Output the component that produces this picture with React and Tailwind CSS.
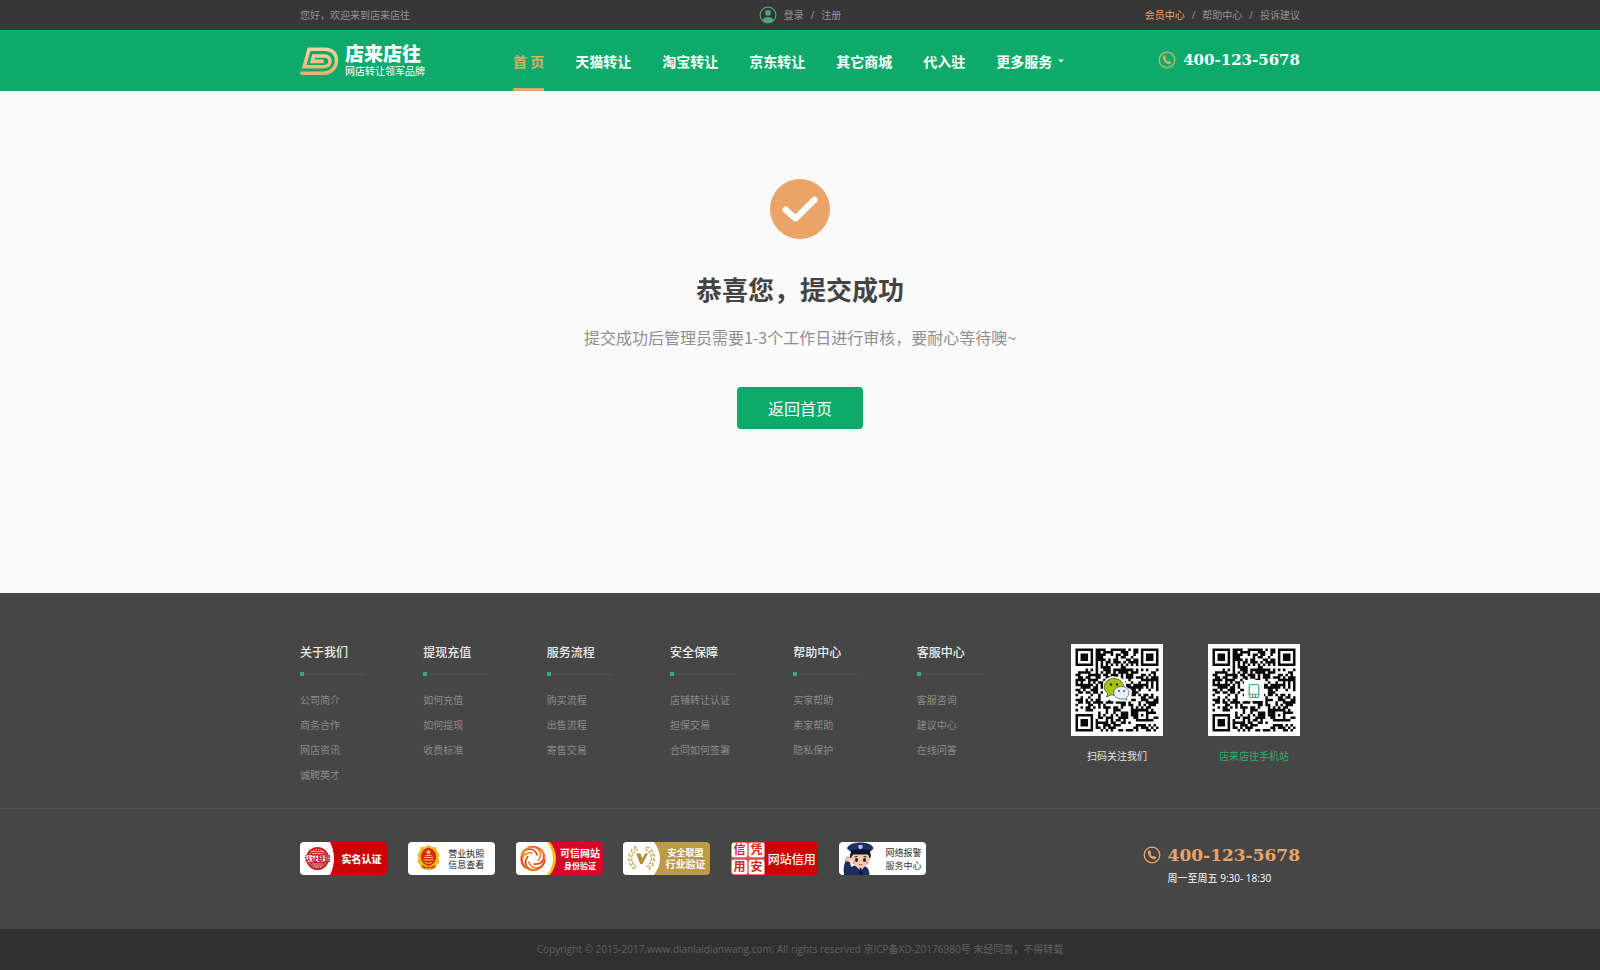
import React from "react";

const COLUMNS = [
  { title: "关于我们", links: ["公司简介", "商务合作", "网店资讯", "诚聘英才"] },
  { title: "提现充值", links: ["如何充值", "如何提现", "收费标准"] },
  { title: "服务流程", links: ["购买流程", "出售流程", "寄售交易"] },
  { title: "安全保障", links: ["店铺转让认证", "担保交易", "合同如何签署"] },
  { title: "帮助中心", links: ["买家帮助", "卖家帮助", "隐私保护"] },
  { title: "客服中心", links: ["客服咨询", "建议中心", "在线问答"] },
];

const NAV = ["天猫转让", "淘宝转让", "京东转让", "其它商城", "代入驻"];

function Logo() {
  return (
    <svg viewBox="0 0 39 30" className="h-[30px] w-[39px]" fill="none" aria-hidden="true">
      <defs>
        <linearGradient id="logoFill" x1="0" y1="0" x2="0" y2="1">
          <stop offset="0" stopColor="#efd3a0" />
          <stop offset="1" stopColor="#f0b070" />
        </linearGradient>
      </defs>
      <path
        d="M0.4 27.2H23C31 27.2 36.4 22 36.4 14.6C36.4 7.6 32 3.2 25.6 3.2H9L4.2 20.8H23.4C27.6 20.8 30 18.4 30 15.2C30 12 27.8 10 24.2 10H13.6L12.2 15.4H23.6"
        stroke="url(#logoFill)"
        strokeWidth="3.6"
      />
    </svg>
  );
}

function UserIcon() {
  return (
    <svg viewBox="0 0 18 18" className="h-[18px] w-[18px]" fill="none" aria-hidden="true">
      <circle cx="9" cy="9" r="7.9" stroke="#4aa876" strokeWidth="1.2" />
      <circle cx="9" cy="6.8" r="2.9" fill="#4aa876" />
      <path d="M3.6 14.4C4.2 11.6 6.4 10.9 9 10.9s4.8.7 5.4 3.5C13 16 11.2 16.8 9 16.8S5 16 3.6 14.4Z" fill="#4aa876" />
    </svg>
  );
}

function PhoneIcon({ color }) {
  return (
    <svg viewBox="0 0 18 18" className="h-[18px] w-[18px]" fill="none" aria-hidden="true">
      <circle cx="9" cy="9" r="7.8" stroke={color} strokeWidth="1.3" />
      <path
        d="M5.6 4.8L6.9 4.3L8.2 6.7L7.3 7.7C7.7 8.9 8.7 10 10 10.6L11.1 9.9L13.3 11.3L12.6 12.7C11.8 13.5 10.4 13.3 9.3 12.8C7.2 11.8 5.7 10.1 5.1 8C4.8 6.8 4.9 5.6 5.6 4.8Z"
        fill={color}
      />
    </svg>
  );
}

const SIZE = 33;

function finderModule(x, y, ox, oy) {
  const dx = x - ox;
  const dy = y - oy;
  if (dx < -1 || dy < -1 || dx > 7 || dy > 7) return null;
  const ring = Math.max(Math.abs(dx - 3), Math.abs(dy - 3));
  return ring === 3 || ring <= 1;
}

function buildModules() {
  let seed = 20176980;
  let d = "";
  for (let y = 0; y < SIZE; y++) {
    for (let x = 0; x < SIZE; x++) {
      seed = (seed * 1103515245 + 12345) % 2147483648;
      let on = seed / 2147483648 < 0.52;
      if (x === 6) on = y % 2 === 0;
      if (y === 6) on = x % 2 === 0;
      const align = Math.max(Math.abs(x - 26), Math.abs(y - 26));
      if (align <= 2) on = align !== 1;
      for (const [ox, oy] of [[0, 0], [SIZE - 7, 0], [0, SIZE - 7]]) {
        const f = finderModule(x, y, ox, oy);
        if (f !== null) on = f;
      }
      if (on) d += `M${x} ${y}h1v1h-1z`;
    }
  }
  return d;
}

const MODULES = buildModules();

function QrCode({ label, children }) {
  return (
    <svg viewBox="0 0 92 92" className="h-[92px] w-[92px] bg-white" role="img" aria-label={label}>
      <path d={MODULES} fill="#0a0a0a" transform="translate(4.5 4.5) scale(2.515)" />
      {children}
    </svg>
  );
}

function WechatMark() {
  return (
    <g>
      <path d="M32 42C32 36 37 32 44 32.5c7 0 12 5 11 10l6 4-1 11-16 0-12-3Z" fill="#fff" />
      <path d="M43 34.5c-5.7 0-9.8 3.8-9.8 8.5 0 2.6 1.3 4.7 3.4 6.3L35.6 53l4.4-2.2c1 .3 2 .4 3 .4 5.5 0 9.8-3.6 9.8-8.2S48.5 34.5 43 34.5Z" fill="#a5c414" stroke="#49591a" strokeWidth=".8" />
      <path d="M50.5 42.5c-4.5 0-7.7 2.8-7.7 6.3s3.2 6.3 7.7 6.3c.9 0 1.7-.1 2.5-.3l3 1.5-.8-2.6c1.7-1.2 2.8-2.9 2.8-4.9 0-3.4-3.1-6.3-7.5-6.3Z" fill="#e8f0fa" stroke="#56606e" strokeWidth=".8" />
      <circle cx="40" cy="40.5" r="1.2" fill="#26300a" />
      <circle cx="46" cy="40.5" r="1.2" fill="#26300a" />
      <circle cx="48" cy="47" r=".9" fill="#333" />
      <circle cx="53" cy="47" r=".9" fill="#333" />
    </g>
  );
}

function MobileMark() {
  return (
    <g fill="none" stroke="#35b06c">
      <rect x="36" y="36" width="20" height="21" rx="2" fill="#fff" stroke="none" />
      <rect x="41.2" y="40.5" width="9.6" height="13" rx="1.5" strokeWidth="1.2" />
      <path d="M41.5 50.3h9M44.5 50.5v3M47.5 50.5v3" strokeWidth="1" />
    </g>
  );
}

function SealArt() {
  return (
    <svg viewBox="0 0 36 33" className="h-[33px] w-[36px] shrink-0" aria-hidden="true">
      <path d="M0 0H30Q38 16.5 30 33H0Z" fill="#fff" />
      <circle cx="17.5" cy="16.5" r="11.5" fill="#c4222a" />
      <circle cx="17.5" cy="16.5" r="9" fill="none" stroke="#fff" strokeWidth=".7" strokeDasharray="1.5 1" />
      <path d="M11 9.5h13M12 11.5h11M12 22h11M13.5 24h8" stroke="#fff" strokeWidth=".6" />
      <rect x="4" y="13" width="27" height="7" fill="#fff" />
      <text x="17.5" y="19" textAnchor="middle" fontSize="6.5" fontWeight="900" fill="#c4222a">认证联盟</text>
    </svg>
  );
}

function EmblemArt() {
  return (
    <svg viewBox="0 0 40 33" className="h-[33px] w-[40px] shrink-0" aria-hidden="true">
      <path d="M20.5 3L24 5.2l4-.2 1 4 2.500 3-1 4 1 4-3 3.500-1.500 3.500-3.500.5-3 1-3-1-3.500-.5-1.500-3.500-3-3.500 1-4-1-4 2.500-3 1-4 4 .2Z" fill="#f5b81c" />
      <path d="M20.5 5.5c5 1.500 8 5 7.500 10.500-.4 4-3.500 7-7.500 8-4-1-7.100-4-7.500-8-.5-5.500 2.500-9 7.500-10.500Z" fill="#dc2718" />
      <path d="M20.5 7.5l.8 1.7 1.9.2-1.4 1.3.4 1.8-1.7-.9-1.7.9.4-1.8-1.4-1.3 1.9-.2Z" fill="#f9d342" />
      <path d="M16 15.500h9M17.500 13.500h6M15.500 18h10M17 20.500c2 1 5 1 7 0" stroke="#f9d342" strokeWidth="1" fill="none" />
      <path d="M14 24l4 2M27 24l-4 2M18.500 25.500h4" stroke="#dc2718" strokeWidth="1.6" />
    </svg>
  );
}

function SwirlArt() {
  return (
    <svg viewBox="0 0 42 33" className="h-[33px] w-[42px] shrink-0" aria-hidden="true">
      <path d="M0 0H34Q46 16.5 34 33H0Z" fill="#f9c20a" />
      <path d="M0 0H31Q43 16.5 31 33H0Z" fill="#fff" />
      <g fill="none" strokeWidth="1.7" strokeLinecap="round">
        {[0, 60, 120, 180, 240, 300].map((a, i) => (
          <path
            key={a}
            d="M13 5.3C21 2.5 29 9 27.6 16.5C26.5 20.5 23 22.5 18 22"
            stroke={i % 2 ? "#f08a22" : "#e2451f"}
            transform={`rotate(${a} 17 16.5)`}
          />
        ))}
      </g>
    </svg>
  );
}

function LaurelArt() {
  const leaves = [-140, -118, -96, -74, -52, -30, 30, 52, 74, 96, 118, 140];
  return (
    <svg viewBox="0 0 41 33" className="h-[33px] w-[41px] shrink-0" aria-hidden="true">
      <path d="M0 0H31Q43 16.5 31 33H0Z" fill="#fff" />
      <g fill="#cfae5f">
        {leaves.map((a) => (
          <g key={a} transform={`rotate(${a} 18.5 16.5)`}>
            <ellipse cx="18.5" cy="3.8" rx=".9" ry="2.1" transform="rotate(60 18.5 3.8)" />
            <ellipse cx="18.5" cy="6.6" rx=".8" ry="1.8" transform="rotate(110 18.5 6.6)" />
          </g>
        ))}
      </g>
      <path d="M12.5 11.5h5l1.8 5.2 2.7-5.2h3L19.5 22h-2.4L13.8 13Z" fill="#b58c2d" />
    </svg>
  );
}

function StampArt() {
  const tiles = [
    ["信", 0, 0],
    ["凭", 17, 0],
    ["用", 0, 17],
    ["安", 17, 17],
  ];
  return (
    <svg viewBox="0 0 34 33" className="h-[33px] w-[34px] shrink-0" aria-hidden="true">
      <rect width="34" height="33" fill="#d9564a" />
      {tiles.map(([ch, x, y]) => (
        <g key={ch}>
          <rect x={x + 0.7} y={y + 0.7} width="15.6" height="14.6" rx="2" fill="#fff" />
          <text x={x + 8.5} y={y + 12} textAnchor="middle" fontSize="12" fontWeight="700" fill="#cf2a20">
            {ch}
          </text>
        </g>
      ))}
    </svg>
  );
}

function OfficerArt() {
  return (
    <svg viewBox="0 0 46 33" className="h-[33px] w-[46px] shrink-0" aria-hidden="true">
      <path d="M5 33C4 27 5 22 7 18l4 2 1 5c3-1.5 6-2 9-2 6 0 9.5 3.5 9.5 10Z" fill="#1d2c5e" />
      <path d="M6 19c-.5-3 1-5 3-5.5l2.5 1.5L10.5 20Z" fill="#f0bfa2" />
      <path d="M17 24l4.5 5 4.5-5Z" fill="#e9eef8" />
      <path d="M20.7 25.5h1.6l.8 7h-3.2Z" fill="#0e1736" />
      <ellipse cx="21.5" cy="17" rx="9.5" ry="8.5" fill="#f5c9ae" />
      <path d="M11.5 17c-1-4 0-7 2-8h16c2.5 1.5 3 4.5 1.5 8l-2-4.5h-15Z" fill="#1b1512" />
      <path d="M8 6.5C9 2.5 15 .5 21.5.5S33.5 2.5 34.5 6.5L31 10H12Z" fill="#1f2f63" />
      <path d="M12 8.5Q21.5 5.5 31 8.5L30.5 12.5Q21.5 9.5 12.5 12.5Z" fill="#0d1533" />
      <path d="M19.5 3h4v3l-2 1.6-2-1.6Z" fill="#b9c3d6" />
      <ellipse cx="17.5" cy="18" rx="1.5" ry="1.9" fill="#2c1a14" />
      <ellipse cx="25.5" cy="18" rx="1.5" ry="1.9" fill="#2c1a14" />
      <path d="M15.5 15l3-.6M24.5 14.4l3 .6" stroke="#2c1a14" strokeWidth="1" />
      <path d="M19.8 22.3q1.7 1 3.4 0" stroke="#b5483a" strokeWidth=".9" fill="none" />
      <circle cx="14.8" cy="20.8" r="1.3" fill="#f09a8c" />
      <circle cx="28.2" cy="20.8" r="1.3" fill="#f09a8c" />
    </svg>
  );
}

function Badge({ className, art, children }) {
  return (
    <a href="#" className={`flex h-[33px] w-[87px] items-center overflow-hidden rounded-sm ${className}`}>
      {art}
      <span className="flex flex-1 flex-col items-center whitespace-nowrap">{children}</span>
    </a>
  );
}

export default function App() {
  return (
    <div
      lang="zh-CN"
      className="flex min-h-screen flex-col bg-[#fafafa] font-['Open_Sans','Noto_Sans_CJK_SC',sans-serif] text-[10px] leading-5"
    >
      <div className="bg-[#373737] text-[#929292]">
        <div className="mx-auto grid h-[30px] w-full max-w-[1000px] grid-cols-3 items-center">
          <p>您好，欢迎来到店来店往</p>
          <div className="flex items-center justify-center gap-[7px]">
            <UserIcon />
            <a href="#">登录</a>
            <span>/</span>
            <a href="#">注册</a>
          </div>
          <div className="flex items-center justify-end gap-[7px]">
            <a href="#" className="text-[#eba467]">会员中心</a>
            <span>/</span>
            <a href="#">帮助中心</a>
            <span>/</span>
            <a href="#">投诉建议</a>
          </div>
        </div>
      </div>

      <header className="bg-[#0daa6c] text-white">
        <div className="mx-auto flex h-[61px] w-full max-w-[1000px] items-center">
          <a href="#" className="flex w-[213px] shrink-0 items-center gap-[6px]">
            <Logo />
            <span className="flex flex-col font-['Noto_Sans_CJK_SC',sans-serif]">
              <span className="text-[19px] leading-5 font-black">店来店往</span>
              <span className="leading-4">网店转让领军品牌</span>
            </span>
          </a>
          <nav className="flex h-full gap-[31px] font-['Noto_Sans_CJK_SC',sans-serif] text-[14px] font-bold">
            <a href="#" className="flex h-full items-center border-y-3 border-t-transparent border-b-[#eba467] whitespace-pre text-[#e0ad68]">首 页</a>
            {NAV.map((item) => (
              <a key={item} href="#" className="flex h-full items-center">{item}</a>
            ))}
            <button type="button" className="flex h-full items-center gap-[6px]">
              更多服务
              <svg viewBox="0 0 6 4" className="h-1 w-[6px]" aria-hidden="true">
                <path d="M0 0.5H6L3 3.5Z" fill="#fff" />
              </svg>
            </button>
          </nav>
          <div className="ml-auto flex items-center gap-[7px] pb-[2px]">
            <PhoneIcon color="#c9b46a" />
            <span className="font-['DejaVu_Serif',serif] text-[15px] font-bold">400-123-5678</span>
          </div>
        </div>
      </header>

      <main className="flex flex-1 flex-col items-center pt-[88px] pb-[164px] font-['Noto_Sans_CJK_SC',sans-serif]">
        <svg viewBox="0 0 60 60" className="h-[60px] w-[60px]" fill="none" aria-hidden="true">
          <circle cx="30" cy="30" r="30" fill="#eba467" />
          <path d="M15.5 30.5L25.5 39.5L44.5 20.8" stroke="#fff" strokeWidth="6.2" strokeLinecap="round" strokeLinejoin="round" />
        </svg>
        <h1 className="mt-[30px] text-[26px] leading-10 font-bold text-[#444]">恭喜您，提交成功</h1>
        <p className="mt-4 text-[16px] leading-6 text-[#8f8f8f]">提交成功后管理员需要1-3个工作日进行审核，要耐心等待噢~</p>
        <button type="button" className="mt-[38px] h-[42px] w-[126px] rounded-sm bg-[#0daa6c] text-[16px] text-white">
          返回首页
        </button>
      </main>

      <footer className="bg-[#464646]">
        <div className="mx-auto flex w-full max-w-[1000px] justify-between pt-[50px] pb-[20px]">
          <div className="grid w-[740px] grid-cols-6">
            {COLUMNS.map((col) => (
              <section key={col.title}>
                <h2 className="text-[12px] font-medium text-[#ececec]">{col.title}</h2>
                <div className="mt-[9px] flex w-[65px] items-center">
                  <i className="h-1 w-1 bg-[#35ad6e]" />
                  <i className="h-px flex-1 bg-[#505050]" />
                </div>
                <ul className="mt-3 leading-[25px] text-[#8a8a8a]">
                  {col.links.map((l) => (
                    <li key={l}><a href="#">{l}</a></li>
                  ))}
                </ul>
              </section>
            ))}
          </div>
          <div className="flex gap-[45px] pt-px text-center">
            <div className="flex flex-col gap-[10px]">
              <QrCode label="扫码关注我们"><WechatMark /></QrCode>
              <p className="text-[#e4e4e4]">扫码关注我们</p>
            </div>
            <div className="flex flex-col gap-[10px]">
              <QrCode label="店来店往手机站"><MobileMark /></QrCode>
              <p className="text-[#2fae69]">店来店往手机站</p>
            </div>
          </div>
        </div>

        <div className="border-t border-[#505050]">
          <div className="mx-auto flex w-full max-w-[1000px] items-start justify-between pt-[33px] pb-[41px]">
            <div className="flex w-[626px] justify-between font-['Noto_Sans_CJK_SC',sans-serif]">
              <Badge className="bg-[#cb0505] text-white" art={<SealArt />}>
                <span className="font-black">实名认证</span>
              </Badge>
              <Badge className="bg-white pr-[10px] text-[9px] leading-[11px] text-[#222]" art={<EmblemArt />}>
                <span>营业执照</span>
                <span>信息查看</span>
              </Badge>
              <Badge className="bg-[#d00b27] font-bold text-white" art={<SwirlArt />}>
                <span className="leading-[13px]">可信网站</span>
                <span className="text-[8px] leading-[13px]">身份验证</span>
              </Badge>
              <Badge className="bg-[#bd9a45] pr-1 font-bold text-white" art={<LaurelArt />}>
                <span className="text-[9px] leading-[10px]">安全联盟</span>
                <span className="leading-[12px]">行业验证</span>
              </Badge>
              <Badge className="bg-[#cb0505] text-white" art={<StampArt />}>
                <span className="text-[12px] font-medium">网站信用</span>
              </Badge>
              <Badge className="bg-white pr-1 text-[9px] leading-[13px] text-[#333]" art={<OfficerArt />}>
                <span>网络报警</span>
                <span>服务中心</span>
              </Badge>
            </div>
            <div className="grid grid-cols-[auto_auto] items-center gap-x-[7px] gap-y-[3px] pt-[3px]">
              <PhoneIcon color="#eba467" />
              <span className="font-['DejaVu_Serif',serif] text-[17px] font-bold text-[#eba467]">400-123-5678</span>
              <span className="col-start-2 text-[10px] text-white">周一至周五 9:30- 18:30</span>
            </div>
          </div>
        </div>

        <p className="bg-[#303030] py-[10px] text-center leading-[21px] text-[#606060]">
          Copyright © 2015-2017,www.dianlaidianwang.com, All rights reserved 京ICP备XD-20176980号 未经同意，不得转载
        </p>
      </footer>
    </div>
  );
}
